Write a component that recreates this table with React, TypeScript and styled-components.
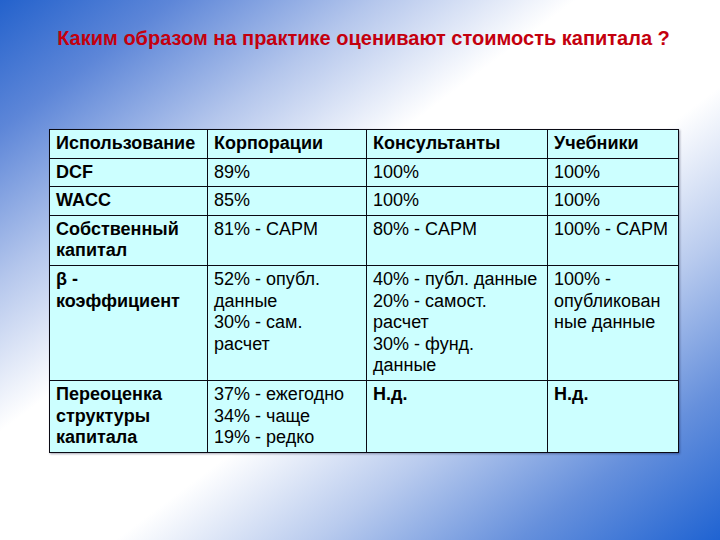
import React from 'react';
import styled, { createGlobalStyle } from 'styled-components';

// -----------------------------------------------------------------------------
// Data
// -----------------------------------------------------------------------------
interface ICell {
  lines: string[];
  strong?: boolean;
}

const headers = ['Использование', 'Корпорации', 'Консультанты', 'Учебники'];

const rows: ICell[][] = [
  [
    { lines: ['DCF'], strong: true },
    { lines: ['89%'] },
    { lines: ['100%'] },
    { lines: ['100%'] },
  ],
  [
    { lines: ['WACC'], strong: true },
    { lines: ['85%'] },
    { lines: ['100%'] },
    { lines: ['100%'] },
  ],
  [
    { lines: ['Собственный', 'капитал'], strong: true },
    { lines: ['81% - CAPM'] },
    { lines: ['80% - CAPM'] },
    { lines: ['100% - CAPM'] },
  ],
  [
    { lines: ['β -', 'коэффициент'], strong: true },
    { lines: ['52% - опубл.', 'данные', '30% - сам.', 'расчет'] },
    {
      lines: [
        '40% - публ. данные',
        '20% - самост.',
        'расчет',
        '30% - фунд.',
        'данные',
      ],
    },
    { lines: ['100% -', 'опубликован', 'ные данные'] },
  ],
  [
    { lines: ['Переоценка', 'структуры', 'капитала'], strong: true },
    { lines: ['37% - ежегодно', '34% - чаще', '19% - редко'] },
    { lines: ['Н.д.'], strong: true },
    { lines: ['Н.д.'], strong: true },
  ],
];

const widths = [158, 159, 181, 131];

// -----------------------------------------------------------------------------
// Styles
// -----------------------------------------------------------------------------
const GlobalStyle = createGlobalStyle`
  html, body {
    margin: 0;
    padding: 0;
  }
  body {
    font-family: "Liberation Sans", Arial, sans-serif;
  }
`;

const Slide = styled.div`
  width: 720px;
  height: 540px;
  box-sizing: border-box;
  padding: 26px 42px 0 49px;
  overflow: hidden;
  background: linear-gradient(
    to bottom right,
    #2462cc 0%,
    #5d86d8 12%,
    #b4c6ec 26%,
    #ffffff 40%,
    #ffffff 58%,
    #b9cbee 72%,
    #6690dc 86%,
    #1f63d2 100%
  );
`;

const Title = styled.h1`
  margin: 0;
  font-size: 20px;
  line-height: 24px;
  font-weight: bold;
  color: #c4000e;
  text-align: center;
  white-space: nowrap;
`;

const Table = styled.table`
  margin-top: 79px;
  width: 629px;
  table-layout: fixed;
  border-collapse: collapse;
  background: #ccffff;
  box-shadow: 1px 1px 2px rgba(0, 0, 40, 0.35);
`;

const Cell = styled.td<{ $strong?: boolean }>`
  border: 1px solid #0a0a14;
  padding: 3px 4px 3px 6px;
  vertical-align: top;
  font-size: 18px;
  line-height: 21.6px;
  font-weight: ${({ $strong }) => ($strong ? 'bold' : 'normal')};
  color: #000;
  white-space: nowrap;
  overflow: hidden;
`;

const Line = styled.div``;

// -----------------------------------------------------------------------------
// Component
// -----------------------------------------------------------------------------
const App = (): JSX.Element => (
  <>
    <GlobalStyle />
    <Slide>
      <Title>Каким образом на практике оценивают стоимость капитала ?</Title>
      <Table>
        <colgroup>
          {widths.map((w) => (
            <col key={w} style={{ width: w }} />
          ))}
        </colgroup>
        <tbody>
          <tr>
            {headers.map((h) => (
              <Cell key={h} $strong>
                {h}
              </Cell>
            ))}
          </tr>
          {rows.map((row, i) => (
            <tr key={i}>
              {row.map((cell, j) => (
                <Cell key={j} $strong={cell.strong}>
                  {cell.lines.map((l, k) => (
                    <Line key={k}>{l}</Line>
                  ))}
                </Cell>
              ))}
            </tr>
          ))}
        </tbody>
      </Table>
    </Slide>
  </>
);

export default App;
